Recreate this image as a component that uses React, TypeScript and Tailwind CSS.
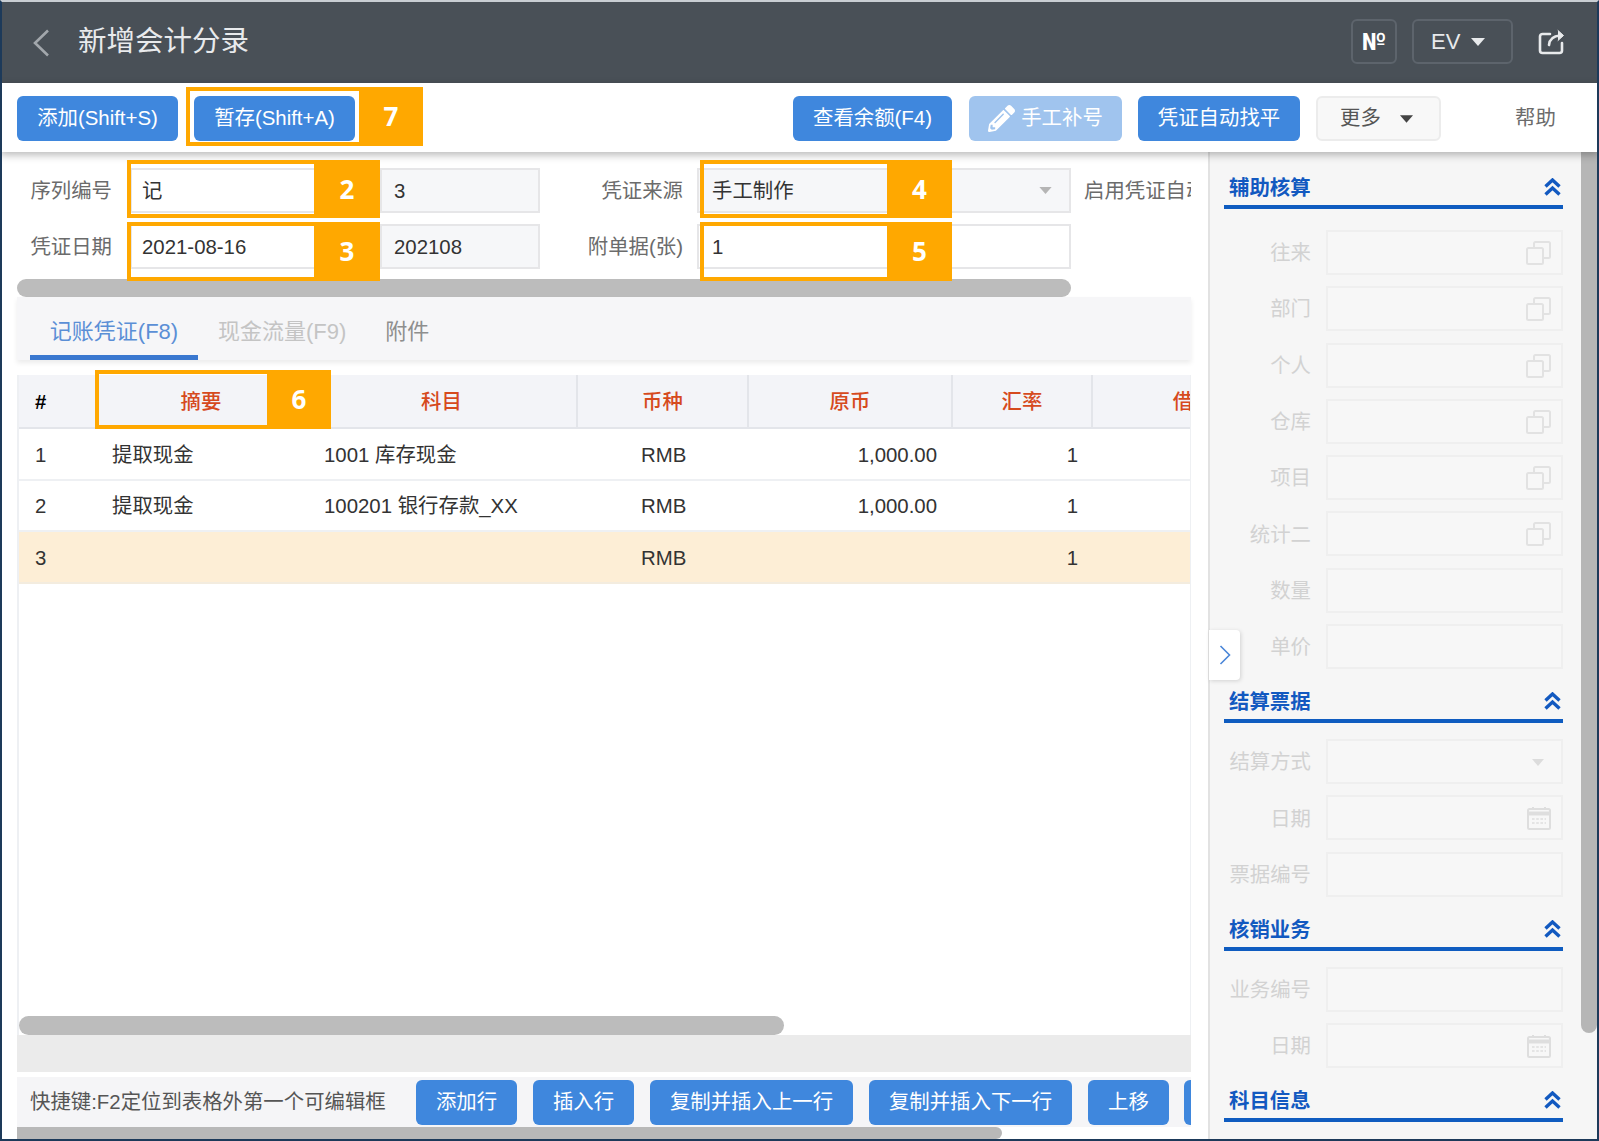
import React from "react";
import { FaPencilAlt } from "react-icons/fa";

const Caret = ({ className }: { className: string }) => (
  <svg viewBox="0 0 14 8" className={className} fill="currentColor"><polygon points="0,0 14,0 7,8" /></svg>
);

const CopyIcon = () => (
  <svg viewBox="0 0 25 24" className="absolute right-[10px] top-[9px] w-[25px] h-[24px] text-[#e2e2e2]" fill="none" stroke="currentColor" strokeWidth="2">
    <rect x="1" y="7" width="16" height="16" rx="1.5" />
    <path d="M8 7V2.5A1.5 1.5 0 0 1 9.5 1h13A1.5 1.5 0 0 1 24 2.5v13a1.5 1.5 0 0 1-1.5 1.5H17" />
  </svg>
);

const CalIcon = () => (
  <svg viewBox="0 0 24 24" className="absolute right-[10px] top-[9px] w-[24px] h-[24px] text-[#dedede]" fill="none" stroke="currentColor" strokeWidth="2">
    <rect x="1" y="3" width="22" height="20" rx="1.5" />
    <path d="M1 7.5h22" strokeWidth="4" />
    <path d="M6 1v3M18 1v3" />
    <path d="M5 13h14M5 17h14" strokeDasharray="2.6 1.6" strokeWidth="1.6" />
  </svg>
);

const UpIcon = () => (
  <svg viewBox="0 0 17 18" className="w-[17px] h-[18px] mt-[10px]" fill="none" stroke="currentColor" strokeWidth="3.4">
    <path d="M1.5 8.5 8.5 2l7 6.5" />
    <path d="M1.5 16.5 8.5 10l7 6.5" />
  </svg>
);

const Btn = ({ className, children }: { className: string; children: React.ReactNode }) => (
  <div className={`h-[45px] rounded-[6px] bg-[#3f87dd] text-white flex items-center justify-center shrink-0 ${className}`}>{children}</div>
);

const Input = ({ className, value, caret }: { className: string; value?: string; caret?: boolean }) => (
  <div className={`relative h-[45px] border-2 border-[#e6e6e8] flex items-center pt-[2px] text-[#333] shrink-0 ${className}`}>
    {value}
    {caret && <Caret className="absolute right-[17px] top-[17px] w-[13px] h-[7px] text-[#b5b5b5]" />}
  </div>
);

const Field = ({ label, icon }: { label: string; icon?: "copy" | "cal" | "caret" }) => (
  <div className="flex items-center h-[45px]">
    <div className="w-[87px] pt-[2px] text-right text-[#d2d2d2]">{label}</div>
    <div className="relative ml-[15px] w-[237px] h-[45px] border-2 border-[#efefef] bg-[#f7f7f7]">
      {icon === "copy" && <CopyIcon />}
      {icon === "cal" && <CalIcon />}
      {icon === "caret" && <Caret className="absolute right-[17px] top-[18px] w-[12px] h-[7px] text-[#dcdcdc]" />}
    </div>
  </div>
);

const Heading = ({ title, className }: { title: string; className: string }) => (
  <div className={`h-[41px] border-b-[4px] border-[#0f5cc0] flex items-start justify-between pl-[5px] pr-[2px] text-[#1259c0] font-bold ${className}`}>
    <span className="leading-[40px]">{title}</span>
    <UpIcon />
  </div>
);

const Mark = ({ n, className, solid }: { n: string; className: string; solid: string }) => (
  <div className={`absolute z-20 flex ${className}`}>
    <div className="flex-1 border-[4px] border-r-0 border-[#ffa800]" />
    <div className={`bg-[#ffa800] flex items-center justify-center text-white font-bold text-[26px] font-['Noto_Sans',sans-serif] ${solid}`}>{n}</div>
  </div>
);

const cols = [
  { w: "w-[78px]", head: "#", cls: "pl-[16px]", hd: "pl-[16px] text-black font-bold" },
  { w: "w-[210px]", head: "摘要", cls: "pl-[15px]", hd: "justify-center pr-[2px] text-[#d64a1e] font-medium" },
  { w: "w-[271px]", head: "科目", cls: "pl-[17px]", hd: "justify-center text-[#d64a1e] font-medium border-r-2 border-[#e3e5ea]" },
  { w: "w-[171px]", head: "币种", cls: "pl-[63px]", hd: "justify-center text-[#d64a1e] font-medium border-r-2 border-[#e3e5ea]" },
  { w: "w-[204px]", head: "原币", cls: "justify-end pr-[16px]", hd: "justify-center text-[#d64a1e] font-medium border-r-2 border-[#e3e5ea]" },
  { w: "w-[140px]", head: "汇率", cls: "justify-end pr-[15px]", hd: "justify-center text-[#d64a1e] font-medium border-r-2 border-[#e3e5ea]" },
  { w: "w-[180px]", head: "借", cls: "", hd: "justify-center text-[#d64a1e] font-medium" },
];

const rows = [
  { v: ["1", "提取现金", "1001 库存现金", "RMB", "1,000.00", "1", ""], bg: "bg-white h-[52px] border-b-2 border-[#eef0f3]" },
  { v: ["2", "提取现金", "100201 银行存款_XX", "RMB", "1,000.00", "1", ""], bg: "bg-white h-[51px] border-b-2 border-[#eef0f3]" },
  { v: ["3", "", "", "RMB", "", "1", ""], bg: "bg-[#fdeed6] h-[52px] border-b-2 border-[#f3ecdf]" },
];

export default function App() {
  return (
    <div className="relative w-[1599px] h-[1141px] overflow-hidden bg-white text-[20.4px] font-['Liberation_Sans','Noto_Sans_CJK_SC',sans-serif]">
      {/* Header */}
      <header className="h-[83px] bg-[#495057] flex items-center text-[#e8eaec]">
        <svg viewBox="0 0 18 28" className="ml-[32px] w-[18px] h-[28px] mt-[3px] text-[#a2a7ac]" fill="none" stroke="currentColor" strokeWidth="2.6">
          <path d="M16 1.5 3 14l13 12.5" />
        </svg>
        <h1 className="ml-[28px] text-[28.5px] font-normal">新增会计分录</h1>
        <div className="ml-auto flex items-center">
          <div className="w-[46px] h-[45px] rounded-[6px] border-2 border-[#5d646c] flex items-center justify-center text-[24px] font-bold font-[Roboto,sans-serif] text-white">№</div>
          <div className="ml-[15px] w-[101px] h-[45px] rounded-[6px] border-2 border-[#5d646c] flex items-center pl-[17px] text-[22px]">
            EV
            <Caret className="ml-[11px] w-[14px] h-[8px]" />
          </div>
          <svg viewBox="0 0 27 26" className="ml-[25px] mr-[34px] w-[27px] h-[26px]" fill="none" stroke="currentColor" strokeWidth="2.6" strokeLinecap="round" strokeLinejoin="round">
            <path d="M12 5H4.5A2.5 2.5 0 0 0 2 7.5v14A2.5 2.5 0 0 0 4.5 24h17a2.5 2.5 0 0 0 2.5-2.5V14" />
            <path d="M11 16c.5-5 4-9 11-9.5" />
            <path d="M20 1.5l5.5 5-5.5 5" fill="currentColor" strokeWidth="1" />
          </svg>
        </div>
      </header>

      {/* Toolbar */}
      <div className="relative z-10 h-[69px] bg-white shadow-[0_3px_8px_rgba(0,0,0,0.28)] flex items-start pt-[13px] pl-[17px]">
        <Btn className="w-[161px]">添加(Shift+S)</Btn>
        <Btn className="w-[161px] ml-[16px]">暂存(Shift+A)</Btn>
        <Btn className="w-[159px] ml-[438px]">查看余额(F4)</Btn>
        <Btn className="w-[153px] ml-[17px] bg-[#a0c4ee] gap-[6px]">
          <FaPencilAlt className="w-[27px] h-[27px]" />
          手工补号
        </Btn>
        <Btn className="w-[162px] ml-[16px]">凭证自动找平</Btn>
        <div className="ml-[16px] w-[125px] h-[45px] rounded-[6px] border-2 border-[#ececec] bg-[#f8f8f8] flex items-center pl-[22px] text-[#555]">
          更多
          <Caret className="ml-[19px] w-[13px] h-[8px] text-[#444]" />
        </div>
        <div className="ml-[74px] h-[45px] flex items-center text-[#6b6b6b]">帮助</div>
      </div>

      {/* Main */}
      <div className="flex h-[987px]">
        {/* Left column */}
        <div className="w-[1208px] shrink-0 pl-[17px] pr-[17px] flex flex-col overflow-hidden">
          <div className="pt-[16px] overflow-hidden">
            <div className="flex items-center w-[1400px]">
              <div className="w-[95px] pt-[2px] text-right text-[#6b6b6b]">序列编号</div>
              <Input className="ml-[18px] w-[250px] pl-[10px] bg-white" value="记" />
              <Input className="w-[160px] pl-[12px] bg-[#f6f7f9]" value="3" />
              <div className="w-[143px] pt-[2px] text-right text-[#6b6b6b]">凭证来源</div>
              <Input className="ml-[14px] w-[374px] pl-[13px] bg-[#f6f7f9]" value="手工制作" caret />
              <div className="ml-[13px] pt-[2px] text-[#6b6b6b] whitespace-nowrap">启用凭证自动</div>
            </div>
            <div className="flex items-center mt-[11px]">
              <div className="w-[95px] pt-[2px] text-right text-[#6b6b6b]">凭证日期</div>
              <Input className="ml-[18px] w-[250px] pl-[10px] bg-white" value="2021-08-16" />
              <Input className="w-[160px] pl-[12px] bg-[#f6f7f9]" value="202108" />
              <div className="w-[143px] pt-[2px] text-right text-[#6b6b6b]">附单据(张)</div>
              <Input className="ml-[14px] w-[374px] pl-[13px] bg-white" value="1" />
            </div>
            <div className="mt-[10px] w-[1054px] h-[18px] rounded-full bg-[#bcbcbc]" />
          </div>

          {/* Tabs */}
          <div className="relative h-[63px] shrink-0 bg-[#f6f6f8] flex items-end shadow-[0_3px_5px_rgba(0,0,0,0.08)] text-[22px] text-[#c4c4c4]">
            <div className="ml-[13px] w-[168px] h-[63px] pt-[18px] text-center border-b-[5px] border-[#3a78d0] text-[#5b8fd6]">记账凭证(F8)</div>
            <div className="ml-[20px] h-[63px] pt-[18px]">现金流量(F9)</div>
            <div className="ml-[39px] h-[63px] pt-[18px] text-[#8e8e8e]">附件</div>
          </div>

          {/* Table */}
          <div className="mt-[15px] flex-1 min-h-0 border-l-2 border-r border-[#eef0f3] flex flex-col overflow-hidden bg-white">
            <div className="flex h-[54px] shrink-0 bg-[#f3f4f8] border-b-2 border-[#e3e5ea]">
              {cols.map((c, i) => (
                <div key={i} className={`${c.w} shrink-0 flex items-center pt-[2px] whitespace-nowrap ${c.hd}`}>
                  {c.head}
                </div>
              ))}
            </div>
            {rows.map((r, ri) => (
              <div key={ri} className={`flex shrink-0 ${r.bg}`}>
                {r.v.map((t, i) => (
                  <div key={i} className={`${cols[i].w} shrink-0 flex items-center pt-[2px] whitespace-nowrap text-[#333] ${cols[i].cls}`}>{t}</div>
                ))}
              </div>
            ))}
            <div className="flex-1" />
            <div className="w-[765px] h-[19px] shrink-0 rounded-full bg-[#bcbcbc]" />
          </div>

          <div className="h-[37px] shrink-0 bg-[#ebebeb]" />
          <div className="h-[5px] shrink-0 bg-white" />

          {/* Bottom bar */}
          <div className="h-[50px] shrink-0 bg-[#f5f5f7] flex items-start pt-[3px] pl-[13px] whitespace-nowrap overflow-hidden">
            <div className="h-[45px] flex items-center text-[#555] w-[386px] shrink-0">快捷键:F2定位到表格外第一个可编辑框</div>
            <Btn className="w-[101px]">添加行</Btn>
            <Btn className="w-[101px] ml-[16px]">插入行</Btn>
            <Btn className="w-[203px] ml-[16px]">复制并插入上一行</Btn>
            <Btn className="w-[203px] ml-[16px]">复制并插入下一行</Btn>
            <Btn className="w-[81px] ml-[16px]">上移</Btn>
            <Btn className="w-[81px] ml-[15px]"> </Btn>
          </div>
          <div className="w-[985px] h-[12px] shrink-0 rounded-r-full bg-[#b8b8b8]" />
        </div>

        {/* Right panel */}
        <aside className="relative flex-1 flex border-l-2 border-[#e2e2e2] bg-[#f6f6f6] overflow-hidden">
          <div className="ml-[14px] w-[339px] shrink-0">
            <Heading title="辅助核算" className="mt-[16px]" />
            <div className="mt-[21px] flex flex-col gap-[11.3px]">
              <Field label="往来" icon="copy" />
              <Field label="部门" icon="copy" />
              <Field label="个人" icon="copy" />
              <Field label="仓库" icon="copy" />
              <Field label="项目" icon="copy" />
              <Field label="统计二" icon="copy" />
              <Field label="数量" />
              <Field label="单价" />
            </div>
            <Heading title="结算票据" className="mt-[13px]" />
            <div className="mt-[16px] flex flex-col gap-[11.3px]">
              <Field label="结算方式" icon="caret" />
              <Field label="日期" icon="cal" />
              <Field label="票据编号" />
            </div>
            <Heading title="核销业务" className="mt-[13px]" />
            <div className="mt-[16px] flex flex-col gap-[11.3px]">
              <Field label="业务编号" />
              <Field label="日期" icon="cal" />
            </div>
            <Heading title="科目信息" className="mt-[13px]" />
          </div>
          <div className="ml-[18px] w-[16px] h-[881px] shrink-0 rounded-b-full bg-[#b6b6b6]" />
        </aside>
      </div>

      {/* Collapse handle */}
      <div className="absolute left-[1209px] top-[630px] w-[31px] h-[50px] bg-white rounded-r-[4px] shadow-[1px_1px_4px_rgba(0,0,0,0.15)] flex items-center justify-center">
        <svg viewBox="0 0 12 20" className="w-[12px] h-[20px] text-[#4a86d8]" fill="none" stroke="currentColor" strokeWidth="1.6">
          <path d="M1.5 1 10.5 10 1.5 19" />
        </svg>
      </div>

      {/* Callouts */}
      <Mark n="7" className="left-[186px] top-[87px] w-[237px] h-[59px]" solid="w-[64px]" />
      <Mark n="2" className="left-[127px] top-[160px] w-[253px] h-[58px]" solid="w-[66px]" />
      <Mark n="3" className="left-[127px] top-[222px] w-[253px] h-[59px]" solid="w-[66px]" />
      <Mark n="4" className="left-[700px] top-[160px] w-[252px] h-[58px]" solid="w-[65px]" />
      <Mark n="5" className="left-[700px] top-[222px] w-[252px] h-[59px]" solid="w-[65px]" />
      <Mark n="6" className="left-[95px] top-[370px] w-[236px] h-[59px]" solid="w-[64px]" />

      {/* Window frame */}
      <div className="absolute inset-0 z-30 border-2 border-[#1d3a5a] border-t-[#c9ced3] pointer-events-none" />
    </div>
  );
}
